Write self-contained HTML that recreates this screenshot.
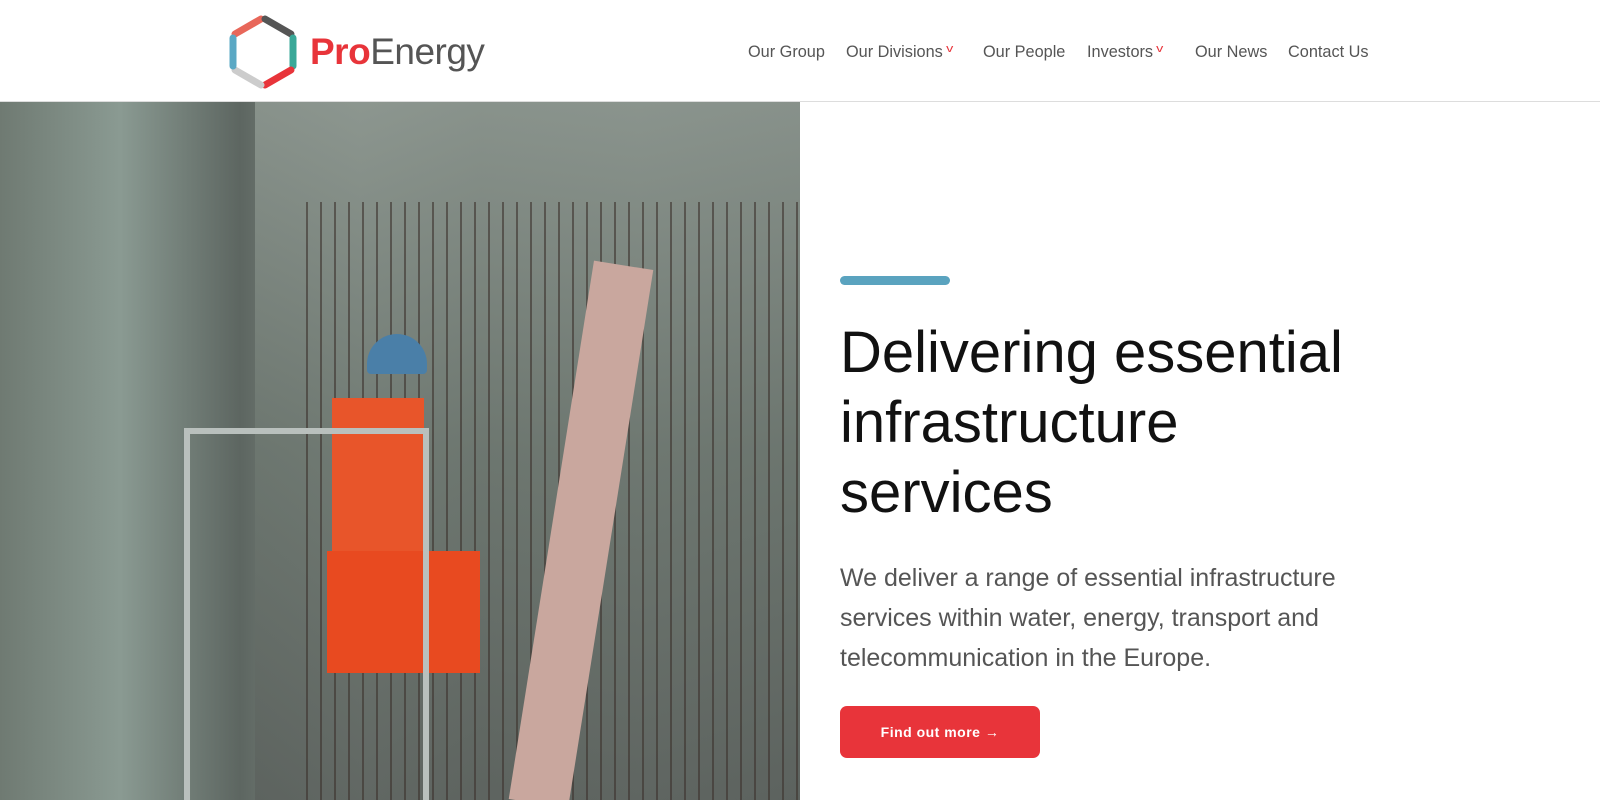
<!DOCTYPE html>
<html><head><meta charset="utf-8"><style>
*{margin:0;padding:0;box-sizing:border-box}
body{width:1600px;height:800px;overflow:hidden;background:#fff;font-family:"Liberation Sans",sans-serif;position:relative}
header{position:absolute;left:0;top:0;width:1600px;height:102px;border-bottom:1px solid #ddd;background:#fff}
.logo{position:absolute;left:227px;top:11px}
.brand{position:absolute;left:310px;top:31px;font-size:37px;letter-spacing:-0.5px;color:#555}
.brand b{color:#e8343a}
nav{position:absolute;top:43px;font-size:16.3px;color:#555}
nav span{position:absolute;white-space:nowrap}
.chev{color:#e8343a;font-size:11px;margin-left:4px;display:inline-block;transform:scaleX(1.3)}
.photo{position:absolute;left:0;top:102px;width:800px;height:698px;overflow:hidden;
background:linear-gradient(90deg,#6f7a72 0%,#8a9a92 15%,#5d6661 30%,#8f9891 45%,#6a716b 60%,#7a817c 80%,#5f6562 100%)}
.bar{position:absolute;left:840px;top:276px;width:110px;height:9px;border-radius:5px;background:#5aa3bf}
h1{position:absolute;left:840px;top:318px;font-weight:300;font-size:58px;line-height:70px;color:#111;width:540px}
p{position:absolute;left:840px;top:558px;font-size:25px;line-height:40px;color:#555;width:540px}
.btn{position:absolute;left:840px;top:706px;width:200px;height:52px;border-radius:7px;background:#e8343a;color:#fff;font-size:14px;font-weight:bold;letter-spacing:.5px;text-align:center;line-height:52px}
</style></head><body>
<header>
<svg class="logo" width="72" height="80" viewBox="222 10 72 80">
<g stroke-width="7" stroke-linecap="round" fill="none">
<line x1="230" y1="33" x2="256" y2="18" stroke="#e8675a"/>
<line x1="260" y1="18" x2="286" y2="33" stroke="#555"/>
<line x1="288" y1="37" x2="288" y2="65" stroke="#3aa898"/>
<line x1="286" y1="69" x2="260" y2="84" stroke="#e8343a"/>
<line x1="256" y1="84" x2="230" y2="69" stroke="#ccc"/>
<line x1="228" y1="37" x2="228" y2="65" stroke="#5aa8c4"/>
</g></svg>
<div class="brand"><b>Pro</b>Energy</div>
<nav>
<span style="left:748px">Our Group</span>
<span style="left:846px">Our Divisions<span class="chev">v</span></span>
<span style="left:983px">Our People</span>
<span style="left:1087px">Investors<span class="chev">v</span></span>
<span style="left:1195px">Our News</span>
<span style="left:1288px">Contact Us</span>
</nav>
</header>
<div class="photo">
<div style="position:absolute;left:255px;top:0;width:545px;height:698px;background:linear-gradient(180deg,#8c968f,#6d7770 50%,#5c625e);opacity:.9"></div>
<div style="position:absolute;left:306px;top:100px;width:494px;height:598px;background:repeating-linear-gradient(90deg,rgba(60,50,45,.6) 0 2px,transparent 2px 14px)"></div>
<div style="position:absolute;left:551px;top:160px;width:60px;height:545px;background:#c9a79e;transform:rotate(9deg)"></div>
<div style="position:absolute;left:367px;top:232px;width:60px;height:40px;border-radius:30px 30px 4px 4px;background:#4a7fa8"></div>
<div style="position:absolute;left:332px;top:296px;width:92px;height:163px;background:#e8552a"></div>
<div style="position:absolute;left:327px;top:449px;width:153px;height:122px;background:#e84a20"></div>
<div style="position:absolute;left:184px;top:326px;width:245px;height:372px;border:6px solid #b9c0bd;border-bottom:none"></div>
</div>
<div class="bar"></div>
<h1>Delivering essential infrastructure services</h1>
<p>We deliver a range of essential infrastructure services within water, energy, transport and telecommunication in the Europe.</p>
<div class="btn">Find out more &#8594;</div>
</body></html>
